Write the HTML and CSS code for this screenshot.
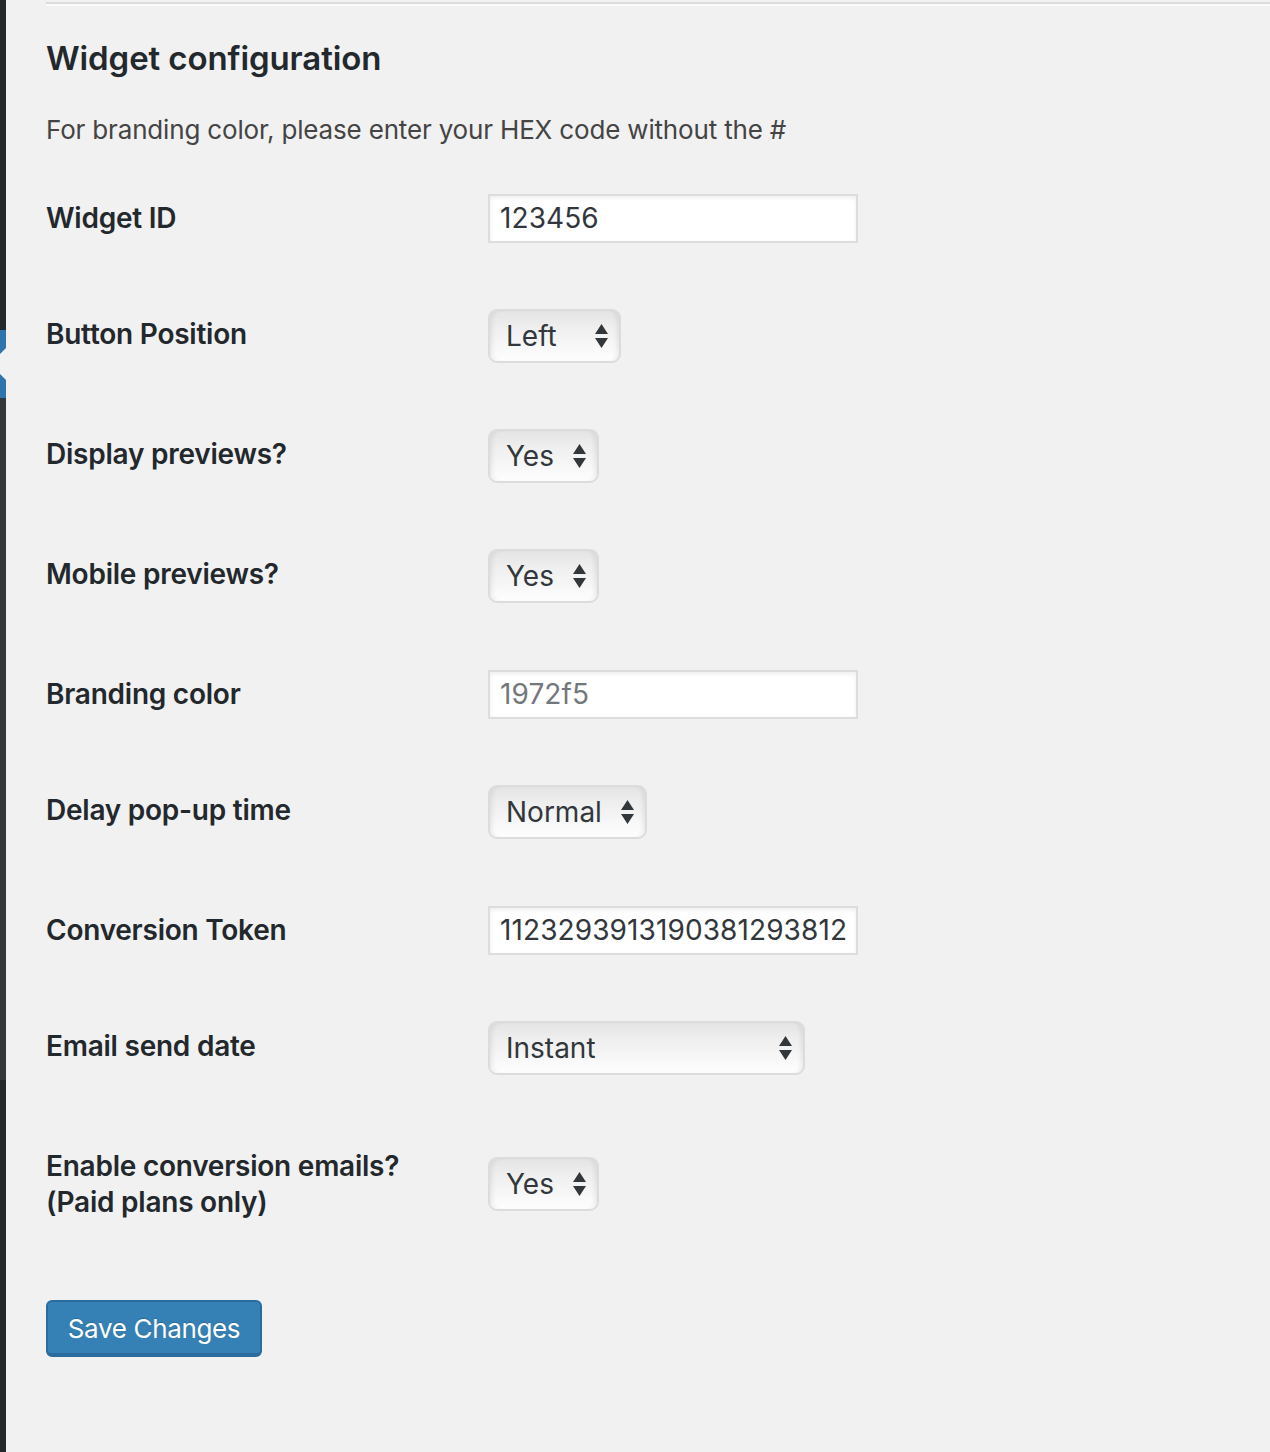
FILE: index.html
```html
<!DOCTYPE html>
<html lang="en">
<head>
<meta charset="utf-8">
<title>Widget configuration</title>
<link rel="stylesheet" href="styles.css">
</head>
<body>
<div class="page">
  <aside class="menu-strip">
    <div class="seg seg-top"></div>
    <div class="seg seg-current"></div>
    <div class="seg seg-sub"></div>
    <div class="seg seg-rest"></div>
  </aside>
  <main class="content">
    <hr class="rule">
    <h2 class="title">Widget configuration</h2>
    <p class="desc">For branding color, please enter your HEX code without the #</p>
    <form class="form-table">
      <div class="row row-input">
        <label class="label" for="wid">Widget ID</label>
        <div class="field"><input id="wid" class="text" type="text" value="123456"></div>
      </div>
      <div class="row row-select">
        <label class="label" for="pos">Button Position</label>
        <div class="field">
          <div class="select w-left">
            <select id="pos"><option>Left</option><option>Right</option></select>
            <svg class="arrows" width="13" height="24" viewBox="0 0 13 24"><path d="M0 10 L6.5 0 L13 10 Z M0 14 L13 14 L6.5 24 Z"/></svg>
          </div>
        </div>
      </div>
      <div class="row row-select">
        <label class="label" for="dp">Display previews?</label>
        <div class="field">
          <div class="select w-yes">
            <select id="dp"><option>Yes</option><option>No</option></select>
            <svg class="arrows" width="13" height="24" viewBox="0 0 13 24"><path d="M0 10 L6.5 0 L13 10 Z M0 14 L13 14 L6.5 24 Z"/></svg>
          </div>
        </div>
      </div>
      <div class="row row-select">
        <label class="label" for="mp">Mobile previews?</label>
        <div class="field">
          <div class="select w-yes">
            <select id="mp"><option>Yes</option><option>No</option></select>
            <svg class="arrows" width="13" height="24" viewBox="0 0 13 24"><path d="M0 10 L6.5 0 L13 10 Z M0 14 L13 14 L6.5 24 Z"/></svg>
          </div>
        </div>
      </div>
      <div class="row row-input">
        <label class="label" for="bc">Branding color</label>
        <div class="field"><input id="bc" class="text" type="text" placeholder="1972f5"></div>
      </div>
      <div class="row row-select">
        <label class="label" for="dl">Delay pop-up time</label>
        <div class="field">
          <div class="select w-normal">
            <select id="dl"><option>Normal</option><option>Fast</option><option>Slow</option></select>
            <svg class="arrows" width="13" height="24" viewBox="0 0 13 24"><path d="M0 10 L6.5 0 L13 10 Z M0 14 L13 14 L6.5 24 Z"/></svg>
          </div>
        </div>
      </div>
      <div class="row row-input">
        <label class="label" for="ct">Conversion Token</label>
        <div class="field"><input id="ct" class="text" type="text" value="11232939131903812938123981"></div>
      </div>
      <div class="row row-select">
        <label class="label" for="es">Email send date</label>
        <div class="field">
          <div class="select w-instant">
            <select id="es"><option>Instant</option><option>One day after conversion</option></select>
            <svg class="arrows" width="13" height="24" viewBox="0 0 13 24"><path d="M0 10 L6.5 0 L13 10 Z M0 14 L13 14 L6.5 24 Z"/></svg>
          </div>
        </div>
      </div>
      <div class="row row-select">
        <label class="label" for="ce">Enable conversion emails?<br>(Paid plans only)</label>
        <div class="field">
          <div class="select w-yes">
            <select id="ce"><option>Yes</option><option>No</option></select>
            <svg class="arrows" width="13" height="24" viewBox="0 0 13 24"><path d="M0 10 L6.5 0 L13 10 Z M0 14 L13 14 L6.5 24 Z"/></svg>
          </div>
        </div>
      </div>
      <div class="submit">
        <button type="button" class="button-primary">Save Changes</button>
      </div>
    </form>
  </main>
</div>
</body>
</html>
```

FILE: styles.css
```css
html, body {
  margin: 0;
  padding: 0;
  background: #f1f1f1;
}

body {
  font-family: Inter, "Noto Sans", "Liberation Sans", sans-serif;
  color: #23282d;
}

.page {
  display: flex;
  min-height: 1452px;
}

.menu-strip {
  width: 6px;
  flex: 0 0 6px;
  display: flex;
  flex-direction: column;
}

.seg-top { height: 330px; background: #23282d; }
.seg-current { height: 68px; background: #2f74ab; position: relative; overflow: hidden; }
.seg-current::after {
  content: "";
  position: absolute;
  right: 0;
  top: 18px;
  width: 0;
  height: 0;
  border-top: 16px solid transparent;
  border-bottom: 16px solid transparent;
  border-right: 16px solid #f1f1f1;
}
.seg-sub { height: 682px; background: #32373c; }
.seg-rest { flex: 1; background: #23282d; }

.content {
  flex: 1;
  padding-left: 40px;
}

.rule {
  margin: 2px 0 0;
  height: 0;
  border: 0;
  border-top: 2px solid #dcdcdc;
  border-bottom: 2px solid #fafafa;
}

.title {
  margin: 30px 0 0;
  font-size: 33px;
  line-height: 44px;
  font-weight: 600;
  letter-spacing: -0.1px;
  color: #23282d;
}

.desc {
  margin: 30px 0 0;
  font-size: 26px;
  line-height: 39px;
  letter-spacing: -0.17px;
  color: #444;
}

.form-table {
  margin-top: 11px;
}

.row {
  display: grid;
  grid-template-columns: 442px 1fr;
}

.label {
  align-self: start;
  padding: 40px 0;
  font-size: 28px;
  line-height: 36px;
  font-weight: 600;
  letter-spacing: -0.24px;
  color: #23282d;
}

.field {
  align-self: center;
  padding: 30px 0;
}

.row-select .field {
  padding: 33px 0;
}

.text {
  display: block;
  box-sizing: border-box;
  width: 370px;
  height: 49px;
  margin: 0;
  padding: 0 10px;
  border: 2px solid #dddddd;
  background: #fff;
  box-shadow: inset 0 2px 4px rgba(0, 0, 0, 0.07);
  font-family: inherit;
  font-size: 28px;
  letter-spacing: 0.1px;
  color: #32373c;
  outline: none;
}

.text::placeholder {
  color: #72777c;
  opacity: 1;
}

.select {
  position: relative;
  box-sizing: border-box;
  height: 54px;
  border: 2px solid #dcdcdc;
  border-radius: 9px;
  background: linear-gradient(#e4e4e4 0%, #eeeeee 30%, #f6f6f6 65%, #fefefe 100%);
  box-shadow: inset 5px 0 5px -3px rgba(0, 0, 0, 0.08), inset -5px 0 5px -3px rgba(0, 0, 0, 0.08);
}

.select select {
  appearance: none;
  -webkit-appearance: none;
  display: block;
  width: 100%;
  height: 100%;
  margin: 0;
  padding: 0 0 0 16px;
  border: 0;
  background: transparent;
  font-family: inherit;
  font-size: 28px;
  color: #32373c;
  outline: none;
}

.arrows {
  position: absolute;
  right: 11px;
  top: 13px;
  fill: #32373c;
  pointer-events: none;
}

.w-left { width: 133px; }
.w-yes { width: 111px; }
.w-normal { width: 159px; }
.w-instant { width: 317px; }

.submit {
  padding-top: 40px;
}

.button-primary {
  box-sizing: border-box;
  width: 216px;
  height: 57px;
  margin: 0;
  padding: 2px 0 0;
  border: 2px solid #2b6c9e;
  border-bottom-width: 4px;
  border-radius: 6px;
  background: #3581b5;
  color: #fff;
  font-family: inherit;
  font-size: 26px;
  letter-spacing: -0.35px;
  text-shadow: 0 -1px 1px rgba(0, 0, 0, 0.15);
  cursor: pointer;
}
```
